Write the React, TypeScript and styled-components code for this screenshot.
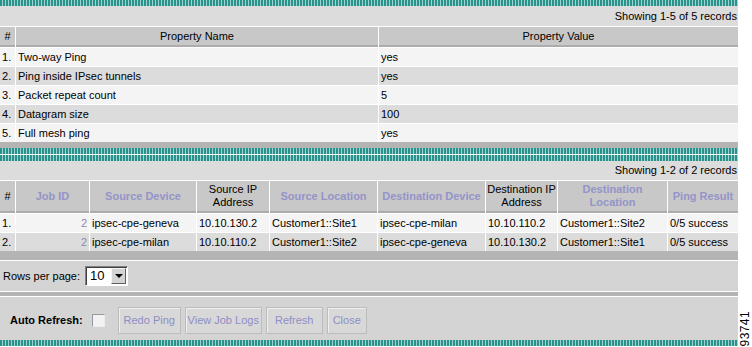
import React from "react";
import styled, { createGlobalStyle } from "styled-components";

const GlobalStyle = createGlobalStyle`
  html, body {
    margin: 0;
    padding: 0;
    background: #fff;
  }
  body {
    font-family: "Liberation Sans", Arial, sans-serif;
    font-size: 11px;
    color: #000;
  }
`;

const Page = styled.div`
  display: flex;
  width: 752px;
  height: 347px;
  overflow: hidden;
  background: #fff;
`;

const Main = styled.div`
  display: flex;
  flex-direction: column;
  width: 738px;
  flex: none;
`;

const Side = styled.div`
  flex: 1;
  display: flex;
  align-items: flex-end;
  justify-content: center;
  padding-bottom: 1px;
`;

const FigureId = styled.span`
  writing-mode: vertical-rl;
  transform: rotate(180deg);
  font-size: 12px;
  line-height: 12px;
  letter-spacing: 0.4px;
`;

const Stripe = styled.div<{ $top?: number }>`
  height: 6px;
  margin-top: ${p => p.$top ?? 0}px;
  background: repeating-linear-gradient(90deg, #2a918b 0 2px, #9fd2ce 2px 3px);
`;

const Bar = styled.div<{ $h: number; $top?: number }>`
  height: ${p => p.$h}px;
  margin-top: ${p => p.$top ?? 0}px;
  background: #b4b4b4;
`;

const InfoBar = styled.div<{ $h: number }>`
  height: ${p => p.$h}px;
  line-height: ${p => p.$h}px;
  padding-right: 1px;
  text-align: right;
  background: #dcdcdc;
`;

const Grid = styled.div`
  display: flex;
  flex-direction: column;
  gap: 1px;
  padding-top: 1px;
  background: #fff;
`;

const Row = styled.div<{ $cols: string; $h: number }>`
  display: grid;
  grid-template-columns: ${p => p.$cols};
  column-gap: 1px;
  height: ${p => p.$h}px;
`;

type Tone = "odd" | "even";

const Cell = styled.div<{ $tone: Tone; $right?: boolean }>`
  display: flex;
  align-items: center;
  justify-content: ${p => (p.$right ? "flex-end" : "flex-start")};
  padding: 0 2px;
  white-space: nowrap;
  overflow: hidden;
  background: ${p => (p.$tone === "odd" ? "#f4f4f4" : "#dcdcdc")};
`;

const HeadCell = styled.div<{ $link?: boolean }>`
  display: flex;
  align-items: center;
  justify-content: center;
  padding: 0;
  text-align: center;
  line-height: 13px;
  white-space: pre-line;
  background: #c8c8c8;
  border-bottom: 2px solid #acacac;
  font-weight: ${p => (p.$link ? "bold" : "normal")};
  color: ${p => (p.$link ? "#9494c8" : "#000")};
`;

const JobLink = styled.span`
  color: #8a8ab4;
`;

const RowsBar = styled.div`
  display: flex;
  align-items: center;
  height: 30px;
  margin-top: 1px;
  padding-left: 3px;
  background: #d4d4d4;
`;

const SelectBox = styled.div`
  display: inline-flex;
  align-items: center;
  justify-content: space-between;
  box-sizing: border-box;
  width: 43px;
  height: 20px;
  margin-left: 5px;
  padding: 1px;
  background: #fff;
  border: 1px solid;
  border-color: #808080 #fff #fff #808080;
  box-shadow: inset 1px 1px 0 #404040;
`;

const SelectValue = styled.span`
  padding-left: 3px;
  font-size: 13px;
  line-height: 16px;
`;

const SelectArrow = styled.span`
  display: flex;
  align-items: center;
  justify-content: center;
  box-sizing: border-box;
  width: 15px;
  height: 16px;
  background: #d4d4d4;
  border: 1px solid;
  border-color: #f4f4f4 #606060 #606060 #f4f4f4;
  &::after {
    content: "";
    border-left: 4px solid transparent;
    border-right: 4px solid transparent;
    border-top: 4px solid #000;
  }
`;

const ActionBar = styled.div`
  display: flex;
  align-items: center;
  height: 43px;
  margin-top: 1px;
  padding: 3px 0 0 10px;
  box-sizing: border-box;
  background: #d4d4d4;
`;

const AutoLabel = styled.span`
  font-weight: bold;
`;

const Check = styled.span`
  width: 13px;
  height: 13px;
  box-sizing: border-box;
  margin-left: 9px;
  background: #f2f2f2;
  border: 1px solid;
  border-color: #9a9a9a #ececec #ececec #9a9a9a;
`;

const Buttons = styled.div`
  display: flex;
  gap: 4px;
  margin-left: 13px;
`;

const ActionButton = styled.button<{ $w: number }>`
  width: ${p => p.$w}px;
  height: 27px;
  padding: 0;
  font: 11px "Liberation Sans", Arial, sans-serif;
  color: #8e8ec6;
  background: #d8d8d8;
  border: 1px solid #bcbcbc;
  box-shadow: inset 1px 1px 0 #efefef;
  white-space: nowrap;
  cursor: default;
`;

const propCols = "15px 362px 359px";
const jobCols = "15px 73px 106px 72px 107px 107px 71px 109px 70px";

const properties = [
  ["Two-way Ping", "yes"],
  ["Ping inside IPsec tunnels", "yes"],
  ["Packet repeat count", "5"],
  ["Datagram size", "100"],
  ["Full mesh ping", "yes"],
];

const jobHeads = [
  { label: "#", link: false },
  { label: "Job ID", link: true },
  { label: "Source Device", link: true },
  { label: "Source IP\nAddress", link: false },
  { label: "Source Location", link: true },
  { label: "Destination Device", link: true },
  { label: "Destination IP\nAddress", link: false },
  { label: "Destination\nLocation", link: true },
  { label: "Ping Result", link: true },
];

const jobs = [
  ["2", "ipsec-cpe-geneva", "10.10.130.2", "Customer1::Site1", "ipsec-cpe-milan", "10.10.110.2", "Customer1::Site2", "0/5 success"],
  ["2", "ipsec-cpe-milan", "10.10.110.2", "Customer1::Site2", "ipsec-cpe-geneva", "10.10.130.2", "Customer1::Site1", "0/5 success"],
];

const tone = (i: number): Tone => (i % 2 === 0 ? "odd" : "even");

export default function App() {
  return (
    <>
      <GlobalStyle />
      <Page>
        <Main>
          <Stripe />
          <InfoBar $h={20}>Showing 1-5 of 5 records</InfoBar>
          <Grid>
            <Row $cols={propCols} $h={20}>
              <HeadCell>#</HeadCell>
              <HeadCell>Property Name</HeadCell>
              <HeadCell>Property Value</HeadCell>
            </Row>
            {properties.map(([name, value], i) => (
              <Row key={name} $cols={propCols} $h={18}>
                <Cell $tone={tone(i)}>{i + 1}.</Cell>
                <Cell $tone={tone(i)}>{name}</Cell>
                <Cell $tone={tone(i)}>{value}</Cell>
              </Row>
            ))}
          </Grid>
          <Bar $h={6} />
          <Stripe />
          <Stripe $top={1} />
          <InfoBar $h={19}>Showing 1-2 of 2 records</InfoBar>
          <Grid>
            <Row $cols={jobCols} $h={32}>
              {jobHeads.map(h => (
                <HeadCell key={h.label} $link={h.link}>{h.label}</HeadCell>
              ))}
            </Row>
            {jobs.map((job, i) => (
              <Row key={i} $cols={jobCols} $h={18}>
                <Cell $tone={tone(i)}>{i + 1}.</Cell>
                <Cell $tone={tone(i)} $right>
                  <JobLink>{job[0]}</JobLink>
                </Cell>
                {job.slice(1).map((v, j) => (
                  <Cell key={j} $tone={tone(i)}>{v}</Cell>
                ))}
              </Row>
            ))}
          </Grid>
          <Bar $h={9} />
          <RowsBar>
            Rows per page:
            <SelectBox>
              <SelectValue>10</SelectValue>
              <SelectArrow />
            </SelectBox>
          </RowsBar>
          <Bar $h={4} $top={1} />
          <ActionBar>
            <AutoLabel>Auto Refresh:</AutoLabel>
            <Check />
            <Buttons>
              <ActionButton $w={63}>Redo Ping</ActionButton>
              <ActionButton $w={77}>View Job Logs</ActionButton>
              <ActionButton $w={57}>Refresh</ActionButton>
              <ActionButton $w={40}>Close</ActionButton>
            </Buttons>
          </ActionBar>
          <Stripe />
        </Main>
        <Side>
          <FigureId>93741</FigureId>
        </Side>
      </Page>
    </>
  );
}
